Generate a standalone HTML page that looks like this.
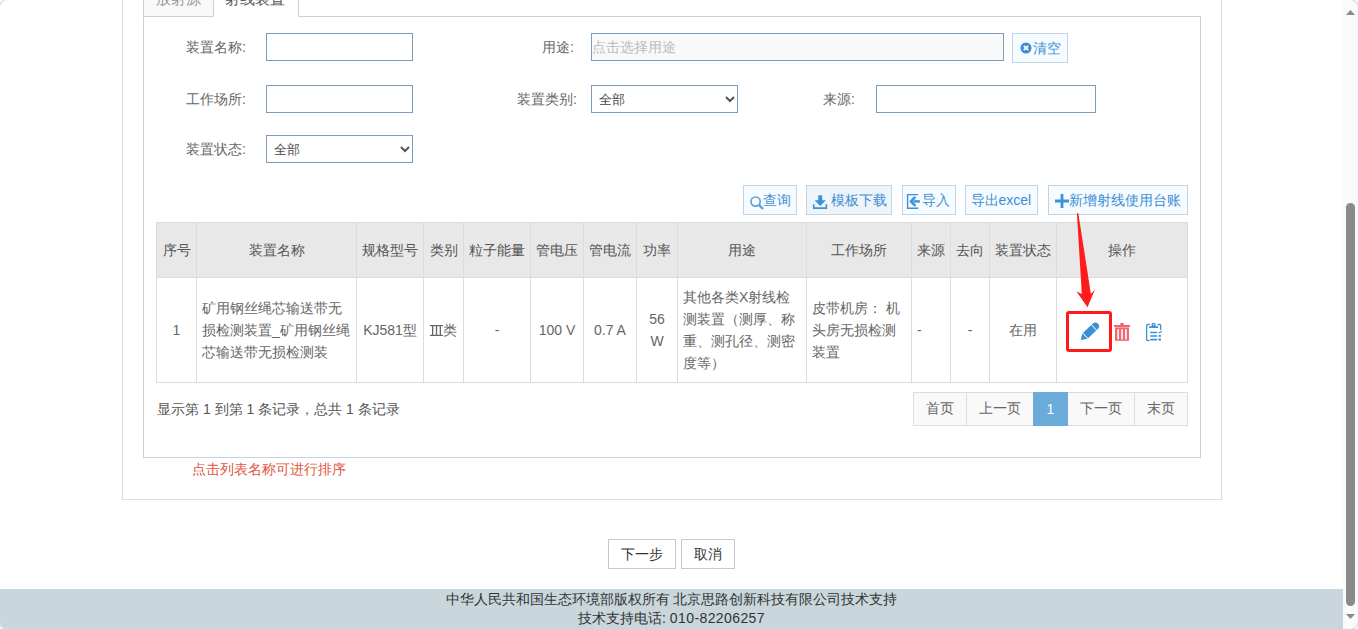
<!DOCTYPE html>
<html><head><meta charset="utf-8">
<style>
html,body{margin:0;padding:0;}
body{width:1358px;height:629px;overflow:hidden;position:relative;background:#fff;font-family:"Liberation Sans",sans-serif;font-size:14px;color:#555;}
.a{position:absolute;}
.lbl{position:absolute;color:#666;font-size:14px;line-height:18px;white-space:nowrap;}
.inp{position:absolute;box-sizing:border-box;border:1px solid #7e9cb9;background:#fff;height:28px;}
.sel{position:absolute;box-sizing:border-box;border:1px solid #7e9cb9;background:#fff;height:28px;font-size:13px;color:#4a4a4a;line-height:28px;padding-left:7px;}
.chev{position:absolute;right:2px;top:9px;}
.btn{position:absolute;box-sizing:border-box;border:1px solid #c2d4e3;background:#f6fbff;color:#3b8fd6;height:30px;top:185px;font-size:14px;line-height:28px;white-space:nowrap;}
.cell{position:absolute;box-sizing:border-box;border:1px solid #dcdcdc;display:flex;align-items:center;justify-content:center;text-align:center;line-height:22px;}
.hd{background:#e8e8e8;color:#555;top:222px;height:56px;}
.bd{background:#fff;color:#666;top:277px;height:106px;}
.left{justify-content:flex-start;text-align:left;padding-left:5px;}
.pg{position:absolute;box-sizing:border-box;top:392px;height:34px;border:1px solid #dddddd;background:#f9f9f9;color:#666;display:flex;align-items:center;justify-content:center;font-size:14px;}
</style></head>
<body>
<!-- outer panel -->
<div class="a" style="left:122px;top:-10px;width:1100px;height:510px;box-sizing:border-box;border:1px solid #dcdcdc;"></div>
<!-- tab panel -->
<div class="a" style="left:143px;top:16px;width:1058px;height:442px;box-sizing:border-box;border:1px solid #c6d3df;"></div>
<!-- tabs -->
<div class="a" style="left:143px;top:-20px;width:71px;height:37px;box-sizing:border-box;border:1px solid #c6d3df;background:#f9f9f9;color:#9a9a9a;font-size:15px;border-bottom-right-radius:2px;"><span class="a" style="left:12px;top:9px;line-height:18px;">放射源</span></div>
<div class="a" style="left:213px;top:-20px;width:86px;height:37px;box-sizing:border-box;border:1px solid #c6d3df;border-bottom:none;background:#fff;color:#555;font-size:15px;"><span class="a" style="left:11px;top:9px;line-height:18px;">射线装置</span></div>

<!-- form row 1 -->
<div class="lbl" style="left:186px;top:38px;">装置名称:</div>
<div class="inp" style="left:266px;top:33px;width:147px;"></div>
<div class="lbl" style="left:542px;top:38px;">用途:</div>
<div class="inp" style="left:591px;top:33px;width:413px;background:#f9f9f9;"><span class="a" style="left:0px;top:4px;color:#bbb;line-height:18px;">点击选择用途</span></div>
<div class="btn" style="left:1012px;top:33px;width:56px;height:30px;font-size:14px;line-height:28px;">
  <svg class="a" style="left:7px;top:8px" width="12" height="12" viewBox="0 0 12 12"><circle cx="6" cy="6" r="5.5" fill="#3b8fd6"/><path d="M3.8 3.8L8.2 8.2M8.2 3.8L3.8 8.2" stroke="#fff" stroke-width="1.8"/></svg>
  <span class="a" style="left:20px;top:0;">清空</span></div>

<!-- form row 2 -->
<div class="lbl" style="left:186px;top:90px;">工作场所:</div>
<div class="inp" style="left:266px;top:85px;width:147px;"></div>
<div class="lbl" style="left:517px;top:90px;">装置类别:</div>
<div class="sel" style="left:591px;top:85px;width:147px;">全部<svg class="chev" width="10" height="8" viewBox="0 0 10 8"><path d="M1 2L5 6L9 2" stroke="#555" stroke-width="2" fill="none"/></svg></div>
<div class="lbl" style="left:823px;top:90px;">来源:</div>
<div class="inp" style="left:876px;top:85px;width:220px;"></div>

<!-- form row 3 -->
<div class="lbl" style="left:186px;top:140px;">装置状态:</div>
<div class="sel" style="left:266px;top:135px;width:147px;">全部<svg class="chev" width="10" height="8" viewBox="0 0 10 8"><path d="M1 2L5 6L9 2" stroke="#555" stroke-width="2" fill="none"/></svg></div>

<!-- toolbar buttons -->
<div class="btn" style="left:743px;width:54px;"><svg class="a" style="left:0;top:0" width="22" height="30" viewBox="0 0 22 30"><circle cx="11.6" cy="15.6" r="4.6" stroke="#5aa2d8" stroke-width="1.7" fill="none"/><path d="M15.2 19.2L19 23" stroke="#5aa2d8" stroke-width="2.4"/></svg><span class="a" style="left:19px;top:0;">查询</span></div>
<div class="btn" style="left:806px;width:86px;background:#eff4f8;"><svg class="a" style="left:0;top:0" width="24" height="30" viewBox="0 0 24 30"><path d="M13.2 9.3V15" stroke="#3b93d8" stroke-width="4"/><path d="M7.6 14.2H18.8L13.2 19.9Z" fill="#3b93d8"/><path d="M6.7 18.2V22.1H19.4V18.2" stroke="#3b93d8" stroke-width="1.6" fill="none"/></svg><span class="a" style="left:24px;top:0;">模板下载</span></div>
<div class="btn" style="left:902px;width:54px;"><svg class="a" style="left:0;top:0" width="20" height="30" viewBox="0 0 20 30"><path d="M15.2 8.6H4.6V22.2H15.2" stroke="#3b93d8" stroke-width="1.4" fill="none"/><path d="M10.5 15.4H16.9" stroke="#3b93d8" stroke-width="2.4"/><path d="M11.6 11.6L7.9 15.4L11.6 19.2" stroke="#3b93d8" stroke-width="2.6" fill="none" stroke-linejoin="round" stroke-linecap="round"/></svg><span class="a" style="left:19px;top:0;">导入</span></div>
<div class="btn" style="left:965px;width:73px;"><span class="a" style="left:4.5px;top:0;">导出excel</span></div>
<div class="btn" style="left:1048px;width:140px;"><svg class="a" style="left:5.5px;top:7.5px" width="14" height="14" viewBox="0 0 14 14"><path d="M7 0V14M0 7H14" stroke="#3b93d8" stroke-width="2.8"/></svg><span class="a" style="left:20px;top:0;">新增射线使用台账</span></div>

<!-- TABLE -->
<div class="cell hd" style="left:156px;width:41px;">序号</div>
<div class="cell hd" style="left:196px;width:161px;">装置名称</div>
<div class="cell hd" style="left:356px;width:68px;">规格型号</div>
<div class="cell hd" style="left:423px;width:41px;">类别</div>
<div class="cell hd" style="left:463px;width:68px;">粒子能量</div>
<div class="cell hd" style="left:530px;width:54px;">管电压</div>
<div class="cell hd" style="left:583px;width:54px;">管电流</div>
<div class="cell hd" style="left:636px;width:42px;">功率</div>
<div class="cell hd" style="left:677px;width:130px;">用途</div>
<div class="cell hd" style="left:806px;width:106px;">工作场所</div>
<div class="cell hd" style="left:911px;width:40px;">来源</div>
<div class="cell hd" style="left:950px;width:40px;">去向</div>
<div class="cell hd" style="left:989px;width:68px;">装置状态</div>
<div class="cell hd" style="left:1056px;width:132px;">操作</div>
<div class="cell bd" style="left:156px;width:41px;">1</div>
<div class="cell bd left" style="left:196px;width:161px;">矿用钢丝绳芯输送带无<br>损检测装置_矿用钢丝绳<br>芯输送带无损检测装</div>
<div class="cell bd" style="left:356px;width:68px;">KJ581型</div>
<div class="cell bd" style="left:423px;width:41px;"><svg width="13" height="11" viewBox="0 0 13 11" style="margin-right:0.5px;margin-top:1px"><g fill="#666"><rect x="0" y="0" width="13" height="1.2"/><rect x="0" y="9.8" width="13" height="1.2"/><rect x="2" y="0" width="1.3" height="11"/><rect x="5.85" y="0" width="1.3" height="11"/><rect x="9.7" y="0" width="1.3" height="11"/></g></svg>类</div>
<div class="cell bd" style="left:463px;width:68px;">-</div>
<div class="cell bd" style="left:530px;width:54px;">100 V</div>
<div class="cell bd" style="left:583px;width:54px;">0.7 A</div>
<div class="cell bd" style="left:636px;width:42px;">56<br>W</div>
<div class="cell bd left" style="left:677px;width:130px;">其他各类X射线检<br>测装置（测厚、称<br>重、测孔径、测密<br>度等）</div>
<div class="cell bd left" style="left:806px;width:106px;">皮带机房： 机<br>头房无损检测<br>装置</div>
<div class="cell bd left" style="left:911px;width:40px;">-</div>
<div class="cell bd" style="left:950px;width:40px;">-</div>
<div class="cell bd" style="left:989px;width:68px;">在用</div>
<div class="cell bd" style="left:1056px;width:132px;"></div>
<!-- /TABLE -->
<!-- action icons -->
<svg class="a" style="left:1079px;top:321px" width="22" height="21" viewBox="0 0 22 21"><g transform="translate(1.8,18.9) rotate(-43)"><path d="M0 0L5.6 -3.7V3.7Z" fill="#3a8fd6"/><rect x="6.5" y="-3.7" width="11.2" height="7.4" fill="#3a8fd6"/><path d="M18.6 -3.7H19.9A3.7 3.7 0 0 1 19.9 3.7H18.6Z" fill="#3a8fd6"/></g></svg>
<svg class="a" style="left:1114px;top:323px" width="17" height="18" viewBox="0 0 17 18"><rect x="6.3" y="0" width="3.5" height="2.2" fill="#f2646e"/><rect x="0" y="2" width="16" height="2" fill="#f2646e"/><path d="M1 4.4H15V17.8H1Z" fill="#f2646e"/><rect x="3.3" y="6.2" width="1.6" height="10.2" fill="#fff"/><rect x="7.2" y="6.2" width="1.6" height="10.2" fill="#fff"/><rect x="11.1" y="6.2" width="1.6" height="10.2" fill="#fff"/></svg>
<svg class="a" style="left:1140px;top:318px" width="28" height="28" viewBox="0 0 28 28"><g fill="none" stroke="#3a93d8" stroke-width="1.3" stroke-linecap="round"><path d="M9.3 6.5H7.8Q6.6 6.5 6.6 7.7V21.3Q6.6 22.5 7.8 22.5H8.9"/><path d="M18 6.5H19.5Q20.7 6.5 20.7 7.7V11.6"/><circle cx="13.6" cy="6.8" r="1.5"/></g><path d="M11.2 8.3Q12 8 12.2 7.2H15Q15.2 8 16 8.3H17.8Q18.4 8.3 18.4 9.1Q18.4 10 17.8 10H9.6Q9 10 9 9.1Q9 8.3 9.6 8.3Z" fill="#3a93d8"/><g stroke="#3a93d8" stroke-width="1.6" stroke-linecap="round"><path d="M10.8 14.5H16.6M10.8 18H16.6M10.8 21.6H16.6"/></g><path d="M18.7 14.2L19.6 14.8L21.8 13.1" stroke="#3a93d8" stroke-width="1.1" fill="none"/><rect x="18.5" y="17" width="2.4" height="1.8" fill="#3a93d8"/><rect x="18.5" y="20.4" width="2.4" height="2.2" fill="#3a93d8"/></svg>
<!-- red box + arrow -->
<div class="a" style="left:1066px;top:311px;width:46px;height:41px;box-sizing:border-box;border:3px solid #ff1a1a;border-radius:3px;"></div>
<svg class="a" style="left:0;top:0" width="1358" height="629" viewBox="0 0 1358 629"><path d="M1076.9 213.3L1078.3 213.3L1090.9 294L1095 289.6L1087.5 307.3L1076.5 291.5L1081.8 294Z" fill="#ff1c1c"/></svg>

<!-- pagination info -->
<div class="a" style="left:157px;top:400px;line-height:18px;color:#555;white-space:nowrap;">显示第 1 到第 1 条记录，总共 1 条记录</div>
<div class="pg" style="left:913px;width:54px;">首页</div>
<div class="pg" style="left:966px;width:68px;">上一页</div>
<div class="pg" style="left:1067px;width:68px;">下一页</div>
<div class="pg" style="left:1134px;width:54px;">末页</div>
<div class="pg" style="left:1033px;width:35px;background:#6aabd9;border-color:#6aabd9;color:#fff;">1</div>

<!-- note -->
<div class="a" style="left:192px;top:460px;line-height:18px;color:#df553c;white-space:nowrap;">点击列表名称可进行排序</div>

<!-- bottom buttons -->
<div class="a" style="left:608px;top:539px;width:68px;height:30px;box-sizing:border-box;border:1px solid #c8c8c8;background:#fff;color:#333;text-align:center;line-height:28px;">下一步</div>
<div class="a" style="left:681px;top:539px;width:54px;height:30px;box-sizing:border-box;border:1px solid #c8c8c8;background:#fff;color:#333;text-align:center;line-height:28px;">取消</div>

<!-- footer -->
<div class="a" style="left:0;top:589px;width:1343px;height:40px;background:#c9d6db;color:#333;text-align:center;font-size:14px;line-height:19px;padding-top:1px;box-sizing:border-box;">中华人民共和国生态环境部版权所有 北京思路创新科技有限公司技术支持<br>技术支持电话: <span style="letter-spacing:0.4px">010-82206257</span></div>

<!-- scrollbar -->
<div class="a" style="left:1343px;top:0;width:15px;height:629px;background:#fafafa;"></div>
<div class="a" style="left:1346px;top:203px;width:9px;height:403px;background:#8a8a8a;border-radius:4.5px;"></div>
<svg class="a" style="left:1343px;top:0" width="15" height="629" viewBox="0 0 15 629"><path d="M3 15L12 15L7.5 10Z" fill="#8a8a8a"/><path d="M3 614L12 614L7.5 619Z" fill="#8a8a8a"/><path d="M7.5 -0.5A9 9 0 0 1 15.5 7.5" stroke="#e4e4e4" stroke-width="1.6" fill="none"/><path d="M15.5 621.5A9 9 0 0 1 7.5 629.5" stroke="#e4e4e4" stroke-width="1.6" fill="none"/></svg>

<svg class="a" style="left:0;top:0" width="12" height="12" viewBox="0 0 12 12"><path d="M-0.5 7.5A8 8 0 0 1 7.5 -0.5" stroke="#e6e6e6" stroke-width="1.6" fill="none"/></svg>
<svg class="a" style="left:0;top:617px" width="12" height="12" viewBox="0 0 12 12"><path d="M0 4A8 8 0 0 0 8 12H0Z" fill="#f4f4f4"/><path d="M-0.5 3.5A8.5 8.5 0 0 0 8.5 12.5" stroke="#dcdcdc" stroke-width="1.4" fill="none"/></svg>
</body></html>
